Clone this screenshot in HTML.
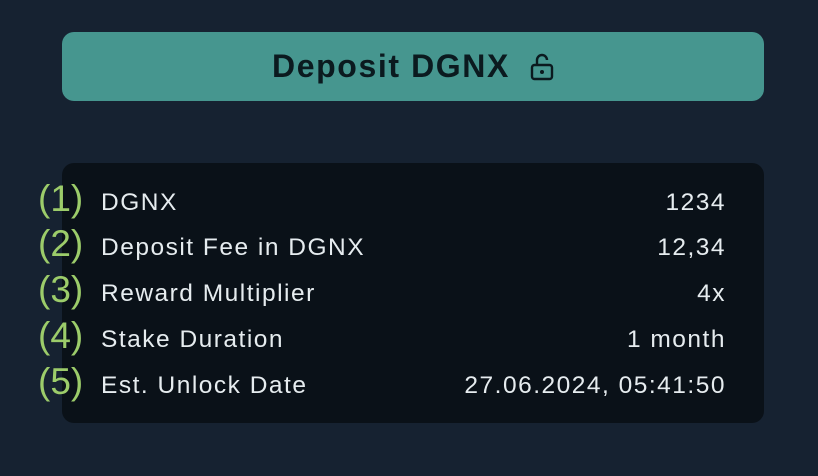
<!DOCTYPE html>
<html><head><style>
body{margin:0;width:818px;height:476px;background:#162231;font-family:"Liberation Sans",sans-serif;position:relative;overflow:hidden}
.btn{position:absolute;left:62px;top:32px;width:702px;height:69px;background:#46968f;border-radius:12px;display:flex;align-items:center;justify-content:center;color:#0b1a1f;font-weight:bold;font-size:32px;letter-spacing:1.6px}
.btn svg{margin-left:20px}
.panel{position:absolute;left:62px;top:163px;width:702px;height:260px;background:#0a1118;border-radius:12px}
.row{position:absolute;left:0;width:818px;height:46px;color:#e6ecef;font-size:24.5px;letter-spacing:1.5px}
.n{position:absolute;left:38px;top:-4px;font-size:37px;color:#9ccc6a;letter-spacing:0}
.l{position:absolute;left:101px;top:7px}
.v{position:absolute;right:92px;top:7px}
</style></head><body>
<div class="btn">Deposit DGNX<svg width="24" height="30" viewBox="0 0 24 30"><path d="M7 13V8a5 5 0 0 1 10 0" fill="none" stroke="#0b1a1f" stroke-width="2.4"/><rect x="2" y="13" width="20" height="14" rx="2.5" fill="none" stroke="#0b1a1f" stroke-width="2.4"/><circle cx="12" cy="20" r="2" fill="#0b1a1f"/></svg></div>
<div class="panel"></div>
<div class="row" style="top:182px"><span class="n">(1)</span><span class="l">DGNX</span><span class="v">1234</span></div>
<div class="row" style="top:227px"><span class="n">(2)</span><span class="l">Deposit Fee in DGNX</span><span class="v">12,34</span></div>
<div class="row" style="top:273px"><span class="n">(3)</span><span class="l">Reward Multiplier</span><span class="v">4x</span></div>
<div class="row" style="top:319px"><span class="n">(4)</span><span class="l">Stake Duration</span><span class="v">1 month</span></div>
<div class="row" style="top:365px"><span class="n">(5)</span><span class="l">Est. Unlock Date</span><span class="v">27.06.2024, 05:41:50</span></div>
</body></html>
